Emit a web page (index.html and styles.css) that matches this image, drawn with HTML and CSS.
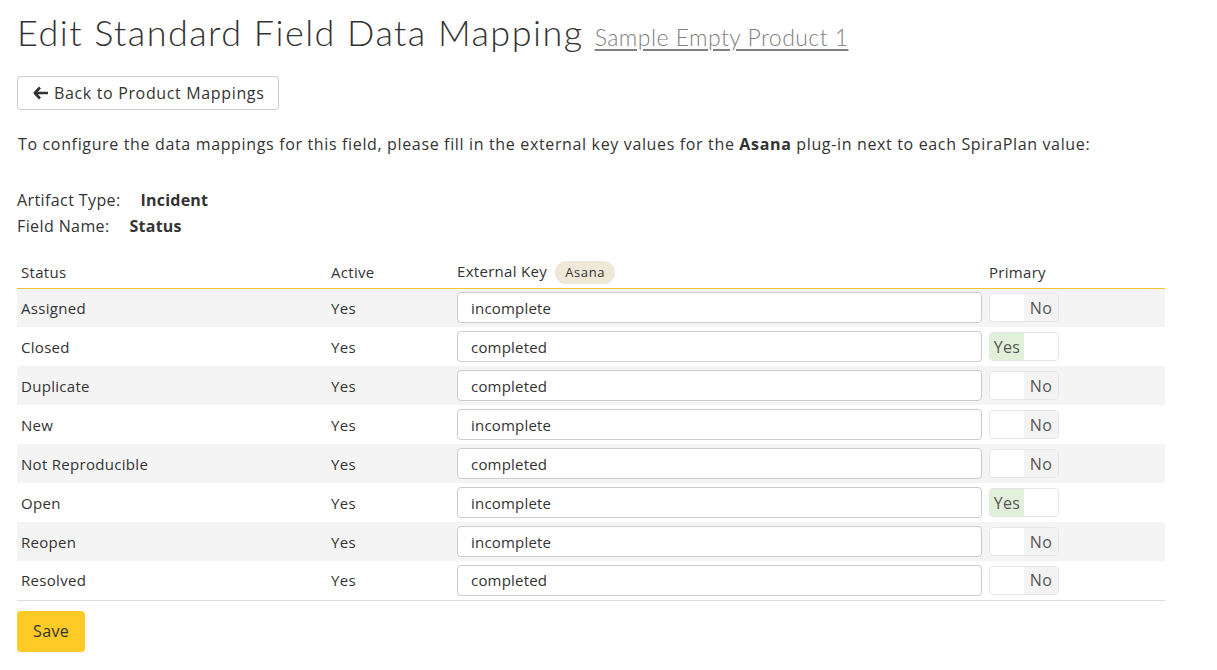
FILE: index.html
```html
<!DOCTYPE html>
<html>
<head>
<meta charset="utf-8">
<link rel="stylesheet" href="styles.css">
</head>
<body>
<div class="page">
  <h1 class="title">Edit Standard Field Data Mapping <a class="product" href="#">Sample Empty Product 1</a></h1>
  <div class="back-row">
    <button class="btn-back"><svg class="arrow" width="16" height="14" viewBox="0 0 16 14"><path d="M7 1.5 L1.8 7 L7 12.5 M2 7 H15" fill="none" stroke="#333" stroke-width="2.6" stroke-linejoin="round"/></svg>Back to Product Mappings</button>
  </div>
  <p class="intro">To configure the data mappings for this field, please fill in the external key values for the <b>Asana</b> plug-in next to each SpiraPlan value:</p>
  <div class="meta">
    <div class="meta-row"><span class="meta-label">Artifact Type:</span><b>Incident</b></div>
    <div class="meta-row"><span class="meta-label">Field Name:</span><b>Status</b></div>
  </div>
  <table class="grid">
    <thead>
      <tr>
        <th class="c-status">Status</th>
        <th class="c-active">Active</th>
        <th class="c-key">External Key <span class="badge">Asana</span></th>
        <th class="c-primary">Primary</th>
      </tr>
    </thead>
    <tbody>
      <tr><td>Assigned</td><td>Yes</td><td><input class="key" value="incomplete"></td><td><span class="toggle"><span class="t-yes"></span><span class="t-no on">No</span></span></td></tr>
      <tr><td>Closed</td><td>Yes</td><td><input class="key" value="completed"></td><td><span class="toggle"><span class="t-yes on">Yes</span><span class="t-no"></span></span></td></tr>
      <tr><td>Duplicate</td><td>Yes</td><td><input class="key" value="completed"></td><td><span class="toggle"><span class="t-yes"></span><span class="t-no on">No</span></span></td></tr>
      <tr><td>New</td><td>Yes</td><td><input class="key" value="incomplete"></td><td><span class="toggle"><span class="t-yes"></span><span class="t-no on">No</span></span></td></tr>
      <tr><td>Not Reproducible</td><td>Yes</td><td><input class="key" value="completed"></td><td><span class="toggle"><span class="t-yes"></span><span class="t-no on">No</span></span></td></tr>
      <tr><td>Open</td><td>Yes</td><td><input class="key" value="incomplete"></td><td><span class="toggle"><span class="t-yes on">Yes</span><span class="t-no"></span></span></td></tr>
      <tr><td>Reopen</td><td>Yes</td><td><input class="key" value="incomplete"></td><td><span class="toggle"><span class="t-yes"></span><span class="t-no on">No</span></span></td></tr>
      <tr><td>Resolved</td><td>Yes</td><td><input class="key" value="completed"></td><td><span class="toggle"><span class="t-yes"></span><span class="t-no on">No</span></span></td></tr>
    </tbody>
  </table>
  <button class="btn-save">Save</button>
</div>
</body>
</html>
```
FILE: styles.css
```css
html, body { margin: 0; padding: 0; background: #fff; }
body { font-family: "Open Sans", "DejaVu Sans", sans-serif; font-size: 15px; color: #333; }
.page { padding: 9px 0 0 17px; width: 1148px; }
.title { font-family: Lato, "Open Sans", sans-serif; font-weight: 300; font-size: 36px; line-height: 46px; margin: 0; color: #333; letter-spacing: 1.45px; }
.product { font-size: 23px; color: #808080; text-decoration: underline; text-underline-offset: 3px; margin-left: 0; letter-spacing: 0.45px; }
.back-row { margin-top: 16px; }
.btn-back { font-family: inherit; font-size: 16px; letter-spacing: 0.65px; color: #333; background: #fff; border: 1px solid #ccc; border-radius: 4px; height: 34px; padding: 0 14px 0 15px; display: inline-flex; align-items: center; gap: 5px; }
.arrow { display: block; }
.intro { margin: 23px 0 0 1px; line-height: 22px; font-size: 16px; letter-spacing: 0.65px; }
.intro b { font-weight: 700; }
.meta { margin-top: 32px; font-size: 16px; letter-spacing: 0.4px; }
.meta-row { line-height: 26px; }
.meta-label { margin-right: 20px; }
.meta-row b { font-weight: 700; letter-spacing: 0.2px; }
.grid { border-collapse: collapse; table-layout: fixed; width: 1148px; margin-top: 18px; letter-spacing: 0.3px; }
.grid th, .grid td { box-sizing: border-box; }
.grid th { text-align: left; font-weight: 400; height: 31px; padding: 0 4px; border-bottom: 1px solid #f1c232; vertical-align: middle; }
.grid td { height: 39px; padding: 0 4px; vertical-align: middle; }
.grid tbody tr:nth-child(odd) { background: #f4f4f4; }
.grid tbody tr:last-child td { border-bottom: 1px solid #ddd; }
.c-status { width: 310px; }
.c-active { width: 130px; }
.c-key { width: 532px; }
.c-primary { width: 176px; }
.grid td:nth-child(3), .grid th.c-key { padding-left: 0; }
.grid td:nth-child(4), .grid th.c-primary { padding-left: 0; }
.badge { display: inline-block; background: #efe8d6; border-radius: 12px; font-size: 13px; letter-spacing: 0.6px; padding: 0 10px; line-height: 23px; margin-left: 4px; }
.key { box-sizing: border-box; width: 525px; height: 31px; border: 1px solid #ccc; border-radius: 4px; font-family: inherit; font-size: 15px; letter-spacing: 0.2px; color: #333; padding: 0 13px; background: #fff; display: block; }
.toggle { display: inline-flex; width: 70px; height: 29px; border: 1px solid #e6e6e6; border-radius: 4px; overflow: hidden; box-sizing: border-box; background: #fff; vertical-align: middle; }
.t-yes, .t-no { flex: 1; display: flex; align-items: center; justify-content: center; font-size: 16px; color: #555; }
.t-yes.on { background: #e1f0da; }
.t-no.on { background: #f3f3f3; }
.btn-save { margin-top: 10px; font-family: inherit; font-size: 16px; letter-spacing: 0.4px; color: #333; background: #fdca26; border: none; border-radius: 4px; height: 41px; padding: 0 16px; }
```
